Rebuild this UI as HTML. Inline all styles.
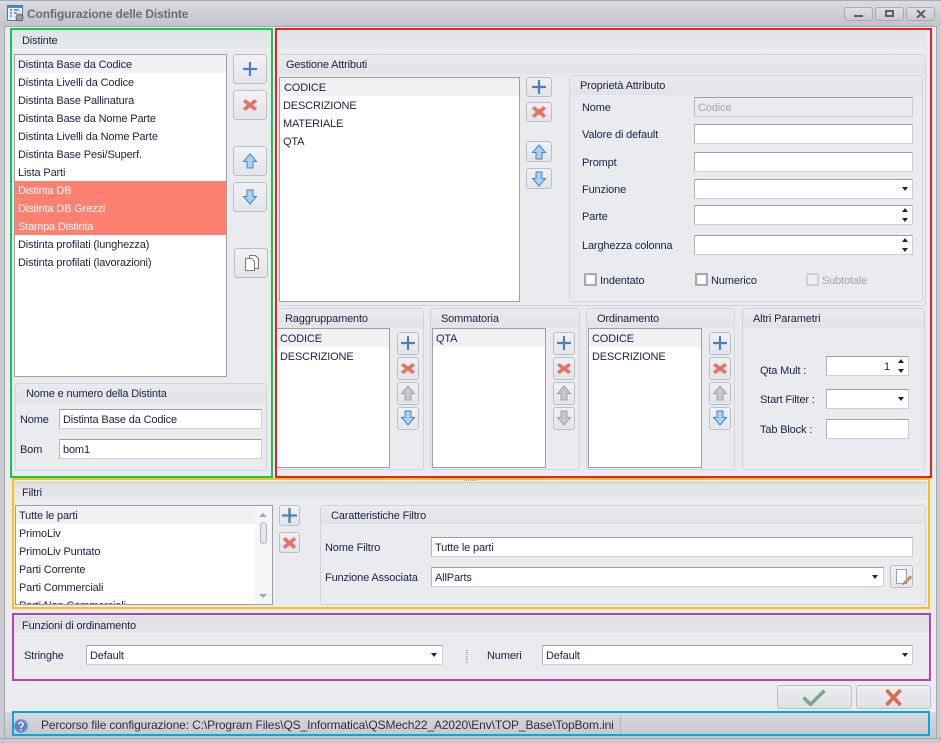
<!DOCTYPE html>
<html><head><meta charset="utf-8"><style>
html,body{margin:0;padding:0;width:941px;height:743px;overflow:hidden;background:#e9ebef}
*{box-sizing:border-box}
body{position:relative;font-family:"Liberation Sans",sans-serif;font-size:11px;letter-spacing:-.15px;color:#22224a}
div,svg{position:absolute}
.t{white-space:nowrap;height:20px;line-height:20px}
.h{background:linear-gradient(#e1e2e6,#e8e9ed);border-bottom:1px solid #f1f2f4;white-space:nowrap;line-height:20px}
.g{border:1px solid #d2d3d8;border-radius:4px 4px 3px 3px}
.gh{position:absolute;left:0;right:0;top:0;height:19px;background:linear-gradient(#eaebee,#e2e3e7);border-radius:3px 3px 0 0;line-height:21px;white-space:nowrap}
.l{background:#fff;border:1px solid #9c9ea8;overflow:hidden}
.r{position:absolute;left:0;right:0;height:18px;line-height:20px;padding-left:3px;white-space:nowrap;overflow:hidden}
.f{background:#f0f1f3}
.s{background:#fd8071;color:#fff}
.i{background:#fff;border:1px solid #cfd0d6;border-top-color:#9c9ea8;border-left-color:#b4b5bd;line-height:20px;padding-left:3px;white-space:nowrap;overflow:hidden}
.b{background:linear-gradient(#f0f1f4,#e4e5e9);border:1px solid #bcbec6;border-radius:3px}
.k{background:#fff;border:2px solid #a8a9b2;width:13px;height:13px;box-shadow:inset 0 0 0 1px #eee}
.dn{position:absolute;width:0;height:0;border-left:3px solid transparent;border-right:3px solid transparent;border-top:4px solid #22223a}
.up{position:absolute;width:0;height:0;border-left:3px solid transparent;border-right:3px solid transparent;border-bottom:4px solid #22223a}
.bd{border-style:solid;border-width:2px;pointer-events:none}
</style></head><body>
<svg width="0" height="0" style="left:0;top:0"><defs>
<symbol id="plus" viewBox="1 1 14 14"><path d="M8 1v14M1 8h14" stroke="#4a80bb" stroke-width="2.200" fill="none"/></symbol>
<symbol id="x" viewBox="0 0 16 16" preserveAspectRatio="none"><path d="M3.500 1.500L8 5.500l4.500-4 2.500 2.500-4 4 4 4-2.500 2.500-4.500-4-4.500 4L1 12l4-4-4-4z" fill="#e4705f" stroke="#d9a39b" stroke-width=".8"/></symbol>
<symbol id="u" viewBox="0 0 16 16"><path d="M8 1L14.500 8.500H11V15H5V8.500H1.500z" fill="#a6d2f2" stroke="#4f80c0" stroke-width="1"/></symbol>
<symbol id="d" viewBox="0 0 16 16"><path d="M8 15L14.500 7.500H11V1H5V7.500H1.500z" fill="#a6d2f2" stroke="#4f80c0" stroke-width="1"/></symbol>
<symbol id="gu" viewBox="0 0 16 16"><path d="M8 1L14.500 8.500H11V15H5V8.500H1.500z" fill="#c6c7c9" stroke="#a2a3a7" stroke-width="1"/></symbol>
<symbol id="gd" viewBox="0 0 16 16"><path d="M8 15L14.500 7.500H11V1H5V7.500H1.500z" fill="#c6c7c9" stroke="#a2a3a7" stroke-width="1"/></symbol>
</defs></svg>

<!-- window frame -->
<div style="left:0;top:0;width:941px;height:26px;background:linear-gradient(#dbdce0,#c3c4ca);border-top:1px solid #a9aab2"></div>
<div style="left:0;top:26px;width:5px;height:717px;background:#c9cacf;border-right:1px solid #a5a6ae"></div>
<div style="left:936px;top:26px;width:5px;height:717px;background:#c9cacf;border-left:1px solid #a5a6ae"></div>
<div style="left:0;top:738px;width:941px;height:5px;background:#c9cacf;border-top:1px solid #a5a6ae"></div>
<div style="left:5px;top:26px;width:931px;height:1px;background:#a5a6ae"></div>

<svg style="left:7px;top:5px" width="17" height="17" viewBox="0 0 17 17"><rect x=".5" y=".5" width="15" height="15" fill="#e8eef5" stroke="#3f7fb5"/><rect x="1" y="1" width="14" height="2" fill="#4a8cc4"/><path d="M3 5h2M3 8h2M3 11h2M7 5h5M7 8h3" stroke="#444" stroke-width="1"/><circle cx="12.500" cy="12.500" r="3.500" fill="#9a9ca2" stroke="#666"/></svg>
<div class="t" style="left:27px;top:4px;font-weight:bold;font-size:12px;letter-spacing:-.14px;color:#696c76">Configurazione delle Distinte</div>

<div class="b" style="left:844px;top:7px;width:29px;height:14px;background:linear-gradient(#dfe0e4,#c9cacf);border-color:#a9aab2"><div style="left:9px;top:7px;width:9px;height:2px;background:#5c5e68"></div></div>
<div class="b" style="left:875px;top:7px;width:29px;height:14px;background:linear-gradient(#dfe0e4,#c9cacf);border-color:#a9aab2"><div style="left:9px;top:2px;width:9px;height:7px;border:2px solid #5c5e68"></div></div>
<div class="b" style="left:906px;top:7px;width:29px;height:14px;background:linear-gradient(#dfe0e4,#c9cacf);border-color:#a9aab2"><svg style="left:9px;top:2px" width="10" height="8" viewBox="0 0 10 8"><path d="M1 0l8 8M9 0l-8 8" stroke="#5c5e68" stroke-width="2"/></svg></div>

<!-- DISTINTE -->
<div class="h" style="left:13px;top:30px;width:257px;height:20px;padding-left:9px;line-height:23px">Distinte</div>
<div class="l" style="left:14px;top:54px;width:213px;height:323px">
<div class="r f" style="top:0">Distinta Base da Codice</div>
<div class="r" style="top:18px">Distinta Livelli da Codice</div>
<div class="r" style="top:36px">Distinta Base Pallinatura</div>
<div class="r" style="top:54px">Distinta Base da Nome Parte</div>
<div class="r" style="top:72px">Distinta Livelli da Nome Parte</div>
<div class="r" style="top:90px">Distinta Base Pesi/Superf.</div>
<div class="r" style="top:108px">Lista Parti</div>
<div class="r s" style="top:126px">Distinta DB</div>
<div class="r s" style="top:144px">Distinta DB Grezzi</div>
<div class="r s" style="top:162px">Stampa Distinta</div>
<div class="r" style="top:180px">Distinta profilati (lunghezza)</div>
<div class="r" style="top:198px">Distinta profilati (lavorazioni)</div>
</div>
<div class="b" style="left:233px;top:54px;width:34px;height:30px"><svg style="left:9px;top:7px" width="14" height="14"><use href="#plus" width="14" height="14"/></svg></div>
<div class="b" style="left:233px;top:90px;width:34px;height:30px"><svg style="left:8px;top:7px" width="16" height="14"><use href="#x" width="16" height="14"/></svg></div>
<div class="b" style="left:233px;top:146px;width:34px;height:30px"><svg style="left:8px;top:6px" width="16" height="16"><use href="#u" width="16" height="16"/></svg></div>
<div class="b" style="left:233px;top:182px;width:34px;height:30px"><svg style="left:8px;top:6px" width="16" height="16"><use href="#d" width="16" height="16"/></svg></div>
<div class="b" style="left:234px;top:248px;width:34px;height:30px"><svg style="left:8px;top:5px" width="18" height="18" viewBox="0 0 18 18"><path d="M6.500 1.500h6l3 3v10h-9z" fill="#f6f6f7" stroke="#77797f"/><path d="M2.500 4.500h6l3 3v9h-9z" fill="#fdfdfd" stroke="#77797f"/></svg></div>

<div class="g" style="left:15px;top:383px;width:252px;height:88px"><div class="gh" style="padding-left:10px">Nome e numero della Distinta</div></div>
<div class="t" style="left:20px;top:410px">Nome</div>
<div class="i" style="left:59px;top:409px;width:203px;height:20px">Distinta Base da Codice</div>
<div class="t" style="left:20px;top:440px">Bom</div>
<div class="i" style="left:59px;top:439px;width:203px;height:20px">bom1</div>

<!-- GESTIONE -->
<div class="h" style="left:277px;top:31px;width:649px;height:20px"></div>
<div class="g" style="left:277px;top:54px;width:649px;height:252px;border-left:0"><div class="gh" style="padding-left:9px">Gestione Attributi</div></div>
<div class="l" style="left:279px;top:77px;width:241px;height:225px">
<div class="r f" style="top:0;padding-left:4px">CODICE</div>
<div class="r" style="top:18px">DESCRIZIONE</div>
<div class="r" style="top:36px">MATERIALE</div>
<div class="r" style="top:54px">QTA</div>
</div>
<div class="b" style="left:526px;top:77px;width:26px;height:20px"><svg style="left:5px;top:2px" width="14" height="14"><use href="#plus" width="14" height="14"/></svg></div>
<div class="b" style="left:526px;top:102px;width:26px;height:20px"><svg style="left:4px;top:2px" width="16" height="14"><use href="#x" width="16" height="14"/></svg></div>
<div class="b" style="left:526px;top:141px;width:26px;height:21px"><svg style="left:4px;top:2px" width="16" height="16"><use href="#u" width="16" height="16"/></svg></div>
<div class="b" style="left:526px;top:168px;width:26px;height:21px"><svg style="left:4px;top:2px" width="16" height="16"><use href="#d" width="16" height="16"/></svg></div>

<div class="g" style="left:569px;top:75px;width:354px;height:227px"><div class="gh" style="padding-left:10px">Proprietà Attributo</div></div>
<div class="t" style="left:582px;top:98px">Nome</div>
<div class="i" style="left:694px;top:97px;width:219px;height:20px;background:#e9ebef;color:#a3a4ae">Codice</div>
<div class="t" style="left:582px;top:125px">Valore di default</div>
<div class="i" style="left:694px;top:124px;width:219px;height:20px"></div>
<div class="t" style="left:582px;top:153px">Prompt</div>
<div class="i" style="left:694px;top:152px;width:219px;height:20px"></div>
<div class="t" style="left:582px;top:180px">Funzione</div>
<div class="i" style="left:694px;top:179px;width:219px;height:20px"><div class="dn" style="right:4px;top:7px"></div></div>
<div class="t" style="left:582px;top:207px">Parte</div>
<div class="i" style="left:694px;top:205px;width:219px;height:20px"><div class="up" style="right:4px;top:2px"></div><div class="dn" style="right:4px;top:12px"></div></div>
<div class="t" style="left:582px;top:236px">Larghezza colonna</div>
<div class="i" style="left:694px;top:235px;width:219px;height:20px"><div class="up" style="right:4px;top:2px"></div><div class="dn" style="right:4px;top:12px"></div></div>
<div class="k" style="left:584px;top:273px"></div>
<div class="t" style="left:600px;top:271px">Indentato</div>
<div class="k" style="left:695px;top:273px"></div>
<div class="t" style="left:711px;top:271px">Numerico</div>
<div class="k" style="left:806px;top:273px;border-color:#cfd0d6;background:#eceef0;box-shadow:none"></div>
<div class="t" style="left:822px;top:271px;color:#a3a4ae">Subtotale</div>

<!-- Raggruppamento -->
<div class="g" style="left:277px;top:308px;width:147px;height:162px;border-left:0"><div class="gh" style="padding-left:8px">Raggruppamento</div></div>
<div class="l" style="left:277px;top:328px;width:113px;height:140px;border-left:0">
<div class="r f" style="top:0">CODICE</div><div class="r" style="top:18px">DESCRIZIONE</div></div>
<div class="b" style="left:397px;top:332px;width:22px;height:23px"><svg style="left:3px;top:3px" width="14" height="14"><use href="#plus" width="14" height="14"/></svg></div>
<div class="b" style="left:397px;top:357px;width:22px;height:23px"><svg style="left:2px;top:4px" width="16" height="13"><use href="#x" width="16" height="13"/></svg></div>
<div class="b" style="left:397px;top:382px;width:22px;height:23px"><svg style="left:2px;top:2px" width="16" height="16"><use href="#gu" width="16" height="16"/></svg></div>
<div class="b" style="left:397px;top:407px;width:22px;height:23px"><svg style="left:2px;top:2px" width="16" height="16"><use href="#d" width="16" height="16"/></svg></div>

<!-- Sommatoria -->
<div class="g" style="left:430px;top:308px;width:150px;height:162px"><div class="gh" style="padding-left:10px">Sommatoria</div></div>
<div class="l" style="left:432px;top:328px;width:114px;height:140px">
<div class="r f" style="top:0">QTA</div></div>
<div class="b" style="left:553px;top:332px;width:22px;height:23px"><svg style="left:3px;top:3px" width="14" height="14"><use href="#plus" width="14" height="14"/></svg></div>
<div class="b" style="left:553px;top:357px;width:22px;height:23px"><svg style="left:2px;top:4px" width="16" height="13"><use href="#x" width="16" height="13"/></svg></div>
<div class="b" style="left:553px;top:382px;width:22px;height:23px"><svg style="left:2px;top:2px" width="16" height="16"><use href="#gu" width="16" height="16"/></svg></div>
<div class="b" style="left:553px;top:407px;width:22px;height:23px"><svg style="left:2px;top:2px" width="16" height="16"><use href="#gd" width="16" height="16"/></svg></div>

<!-- Ordinamento -->
<div class="g" style="left:586px;top:308px;width:149px;height:162px"><div class="gh" style="padding-left:10px">Ordinamento</div></div>
<div class="l" style="left:588px;top:328px;width:114px;height:140px">
<div class="r f" style="top:0">CODICE</div><div class="r" style="top:18px">DESCRIZIONE</div></div>
<div class="b" style="left:709px;top:332px;width:22px;height:23px"><svg style="left:3px;top:3px" width="14" height="14"><use href="#plus" width="14" height="14"/></svg></div>
<div class="b" style="left:709px;top:357px;width:22px;height:23px"><svg style="left:2px;top:4px" width="16" height="13"><use href="#x" width="16" height="13"/></svg></div>
<div class="b" style="left:709px;top:382px;width:22px;height:23px"><svg style="left:2px;top:2px" width="16" height="16"><use href="#gu" width="16" height="16"/></svg></div>
<div class="b" style="left:709px;top:407px;width:22px;height:23px"><svg style="left:2px;top:2px" width="16" height="16"><use href="#d" width="16" height="16"/></svg></div>

<!-- Altri -->
<div class="g" style="left:742px;top:308px;width:183px;height:162px"><div class="gh" style="padding-left:10px">Altri Parametri</div></div>
<div class="t" style="left:760px;top:361px">Qta Mult :</div>
<div class="i" style="left:826px;top:356px;width:83px;height:20px"><div style="right:18px;top:0">1</div><div class="up" style="right:4px;top:2px"></div><div class="dn" style="right:4px;top:12px"></div></div>
<div class="t" style="left:760px;top:390px">Start Filter :</div>
<div class="i" style="left:826px;top:389px;width:83px;height:20px"><div class="dn" style="right:4px;top:7px"></div></div>
<div class="t" style="left:760px;top:420px">Tab Block :</div>
<div class="i" style="left:826px;top:419px;width:83px;height:20px"></div>

<!-- splitter -->
<div style="left:464px;top:480px;width:14px;height:1px;background:repeating-linear-gradient(90deg,#a9aab2 0 1px,transparent 1px 2px)"></div>

<!-- FILTRI -->
<div style="left:14px;top:482px;width:913px;height:1px;background:#c8c9cf"></div>
<div class="h" style="left:14px;top:483px;width:913px;height:18px;padding-left:8px">Filtri</div>
<div class="l" style="left:15px;top:505px;width:258px;height:100px">
<div class="r f" style="top:0;right:17px">Tutte le parti</div>
<div class="r" style="top:18px;right:17px">PrimoLiv</div>
<div class="r" style="top:36px;right:17px">PrimoLiv Puntato</div>
<div class="r" style="top:54px;right:17px">Parti Corrente</div>
<div class="r" style="top:72px;right:17px">Parti Commerciali</div>
<div class="r" style="top:90px;right:17px">Parti Non Commerciali</div>
<div style="right:0;top:0;width:17px;height:98px;background:#f4f5f6"></div>
<div style="right:5px;top:7px;border-left:4px solid transparent;border-right:4px solid transparent;border-bottom:4px solid #a2a3ab;width:0;height:0"></div>
<div style="right:5px;top:16px;width:7px;height:22px;background:#e6e7ea;border:1px solid #b5b6bd;border-radius:3px"></div>
<div style="right:5px;top:88px;border-left:4px solid transparent;border-right:4px solid transparent;border-top:4px solid #a2a3ab;width:0;height:0"></div>
</div>
<div class="b" style="left:279px;top:505px;width:21px;height:21px"><svg style="left:2px;top:2px" width="15" height="15"><use href="#plus" width="15" height="15"/></svg></div>
<div class="b" style="left:279px;top:532px;width:21px;height:21px"><svg style="left:2px;top:3px" width="15" height="14"><use href="#x" width="15" height="14"/></svg></div>
<div class="g" style="left:320px;top:505px;width:606px;height:100px"><div class="gh" style="height:18px;line-height:20px;padding-left:10px">Caratteristiche Filtro</div></div>
<div class="t" style="left:325px;top:538px">Nome Filtro</div>
<div class="i" style="left:431px;top:537px;width:482px;height:20px">Tutte le parti</div>
<div class="t" style="left:325px;top:568px">Funzione Associata</div>
<div class="i" style="left:431px;top:567px;width:453px;height:20px">AllParts<div class="dn" style="right:5px;top:7px"></div></div>
<div class="b" style="left:890px;top:565px;width:23px;height:23px"><svg style="left:4px;top:2px" width="17" height="18" viewBox="0 0 17 18"><path d="M1.500 1.500h10v14h-10z" fill="#fdfdff" stroke="#8ea6d6"/><path d="M15 8l1.500 1.500-6 6-2.500 1 1-2.500z" fill="#e6a93a" stroke="#8c6a2a" stroke-width=".6"/></svg></div>

<!-- FUNZIONI -->
<div class="h" style="left:14px;top:616px;width:915px;height:18px;padding-left:8px;background:linear-gradient(#e0e1e5,#e4e5e9)">Funzioni di ordinamento</div>
<div class="t" style="left:24px;top:646px">Stringhe</div>
<div class="i" style="left:86px;top:645px;width:357px;height:20px">Default<div class="dn" style="right:5px;top:7px"></div></div>
<div style="left:466px;top:650px;width:1px;height:13px;background:repeating-linear-gradient(#9a9ba3 0 1px,transparent 1px 2px)"></div>
<div style="left:467px;top:650px;width:1px;height:13px;background:repeating-linear-gradient(#c5c6cc 0 1px,transparent 1px 2px)"></div>
<div class="t" style="left:487px;top:646px">Numeri</div>
<div class="i" style="left:542px;top:645px;width:371px;height:20px">Default<div class="dn" style="right:4px;top:7px"></div></div>

<!-- OK / CANCEL -->
<div class="b" style="left:777px;top:685px;width:75px;height:24px;background:linear-gradient(#eceef0,#dfe1e5)"><svg style="left:24px;top:3px" width="24" height="17" viewBox="0 0 24 17"><path d="M1.500 8.500l7 7L22.500 1.500" fill="none" stroke="#77a895" stroke-width="3.600"/></svg></div>
<div class="b" style="left:856px;top:685px;width:75px;height:24px;background:linear-gradient(#eceef0,#dfe1e5)"><svg style="left:28px;top:3px" width="17" height="17" viewBox="0 0 17 17"><path d="M1.500 1l14 15M15.500 1l-14 15" fill="none" stroke="#dd6a4c" stroke-width="3.600"/></svg></div>

<!-- STATUS -->
<div style="left:5px;top:712px;width:931px;height:26px;background:linear-gradient(#d8d9dd,#c5c6cb)"></div>
<svg style="left:14px;top:719px" width="14" height="14" viewBox="0 0 14 14"><circle cx="7" cy="7" r="6.500" fill="#5f86c4" stroke="#8a9cc0"/><path d="M4.800 5.200a2.200 2 0 1 1 3.300 1.900c-.8.500-1.100.9-1.100 1.600M7 10v1.500" stroke="#fff" stroke-width="1.400" fill="none"/></svg>
<div class="t" style="left:41px;top:715px;font-size:12px;letter-spacing:-.12px;color:#30303e">Percorso file configurazione: C:\Program Files\QS_Informatica\QSMech22_A2020\Env\TOP_Base\TopBom.ini</div>
<div style="left:620px;top:716px;width:1px;height:17px;background:#b3b4ba"></div>

<!-- COLORED FRAMES -->
<div class="bd" style="left:10px;top:28px;width:263px;height:450px;border-color:#0dc94f"></div>
<div class="bd" style="left:275px;top:28px;width:657px;height:450px;border-color:#ee1c25"></div>
<div class="bd" style="left:12px;top:478px;width:918px;height:131px;border-color:#fdc20e"></div>
<div class="bd" style="left:12px;top:613px;width:919px;height:68px;border-color:#bb3fbb"></div>
<div class="bd" style="left:12px;top:711px;width:918px;height:25px;border-color:#00a9ec"></div>
</body></html>
